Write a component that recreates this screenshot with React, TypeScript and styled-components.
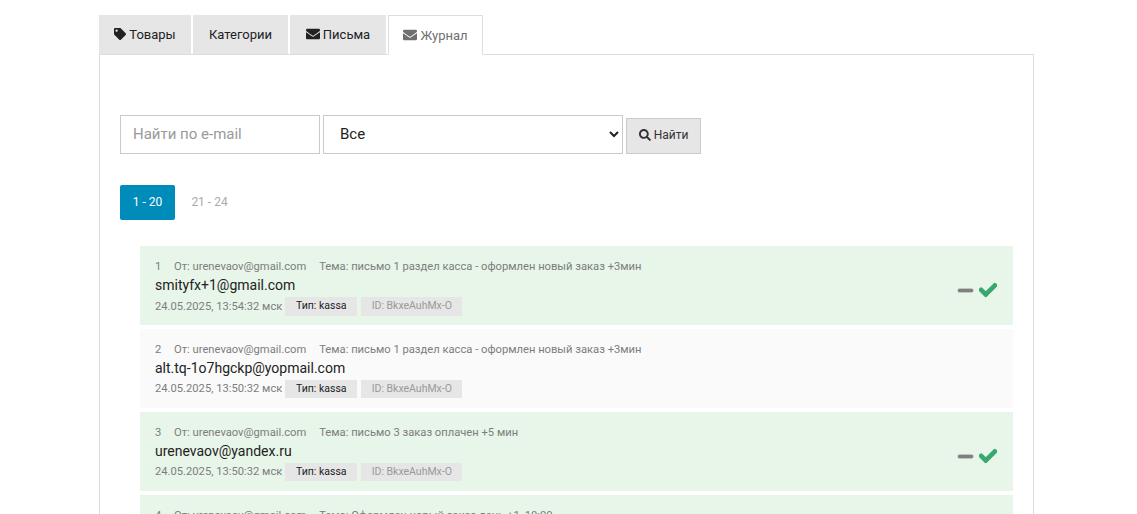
import React from "react";
import styled, { createGlobalStyle } from "styled-components";
import { FaTag, FaEnvelope, FaSearch, FaCheck, FaMinus } from "react-icons/fa";

const Global = createGlobalStyle`
  html, body { margin: 0; padding: 0; background: #fff; overflow: hidden; height: 514px; }
  body { font-family: Roboto, "Liberation Sans", sans-serif; color: #222; }
  * { box-sizing: border-box; }
`;

const Page = styled.div`
  width: 935px;
  margin-left: 99px;
  padding-top: 15px;
`;

const Tabs = styled.nav`
  display: flex;
  gap: 2px;
  height: 40px;
  margin-bottom: -1px;
  position: relative;
  z-index: 1;
`;

const Tab = styled.a<{ $active?: boolean; $w: number }>`
  display: flex;
  align-items: center;
  justify-content: center;
  gap: 3px;
  width: ${(p) => p.$w}px;
  height: ${(p) => (p.$active ? 40 : 39)}px;
  padding-bottom: ${(p) => (p.$active ? 0 : 1)}px;
  font-size: 13px;
  color: ${(p) => (p.$active ? "#6f6f6f" : "#222")};
  background: ${(p) => (p.$active ? "#fff" : "#e6e6e6")};
  border: ${(p) => (p.$active ? "1px solid #ddd" : "0")};
  border-bottom: ${(p) => (p.$active ? "1px solid #fff" : "0")};
  svg { font-size: 14px; }
`;

const TagIcon = styled(FaTag)`
  && { font-size: 12px; }
`;

const Panel = styled.section`
  border: 1px solid #ddd;
  border-bottom: 0;
  padding: 60px 20px 0;
  height: 470px;
`;

const SearchBar = styled.form`
  display: flex;
  align-items: flex-end;
  gap: 3px;
`;

const TextInput = styled.input`
  width: 200px;
  height: 39px;
  padding: 0 12px 2px;
  font: 15px Roboto, sans-serif;
  border: 1px solid #cacaca;
  background: #fff;
  outline: none;
  &::placeholder { color: #9a9a9a; opacity: 1; }
`;

const Select = styled.select`
  width: 300px;
  height: 39px;
  padding: 0 12px 2px;
  font: 15px Roboto, sans-serif;
  color: #222;
  border: 1px solid #cacaca;
  border-radius: 0;
  background: #fff;
  outline: none;
`;

const SearchButton = styled.button`
  display: flex;
  align-items: center;
  justify-content: center;
  gap: 3px;
  width: 75px;
  height: 36px;
  padding: 0 0 2px;
  font: 12px Roboto, sans-serif;
  color: #333;
  background: #e6e6e6;
  border: 1px solid #cacaca;
  svg { font-size: 12px; }
`;

const Pager = styled.div`
  display: flex;
  gap: 7px;
  margin-top: 31px;
`;

const PageLink = styled.a<{ $active?: boolean }>`
  display: flex;
  align-items: center;
  justify-content: center;
  width: 55px;
  height: 35px;
  padding-bottom: 2px;
  font-size: 12px;
  border-radius: 2px;
  color: ${(p) => (p.$active ? "#fff" : "#aaa")};
  background: ${(p) => (p.$active ? "#008cba" : "transparent")};
`;

const List = styled.ul`
  list-style: none;
  margin: 26px 0 0 20px;
  padding: 0;
  display: flex;
  flex-direction: column;
  gap: 4px;
`;

const Row = styled.li<{ $sent: boolean }>`
  display: flex;
  align-items: center;
  justify-content: space-between;
  height: 79px;
  padding: 0 16px 0 15px;
  background: ${(p) => (p.$sent ? "#e8f5e9" : "#fafafa")};
`;

const Info = styled.div`
  display: flex;
  flex-direction: column;
  align-self: flex-start;
  padding-top: 13px;
`;

const Meta = styled.div`
  display: flex;
  gap: 13px;
  font-size: 11.2px;
  line-height: 16px;
  color: #7d7d7d;
`;

const Num = styled.span`
  width: 6px;
`;

const Email = styled.div`
  font-size: 14px;
  line-height: 20px;
  color: #222;
`;

const Details = styled.div`
  display: flex;
  align-items: center;
  gap: 3px;
  margin-top: 2px;
  font-size: 11.2px;
  color: #7d7d7d;
`;

const Stamp = styled.span`
  padding-bottom: 2px;
  li:first-child & { padding-bottom: 0; }
`;

const Badge = styled.span<{ $muted?: boolean }>`
  display: flex;
  align-items: center;
  justify-content: center;
  height: 18px;
  padding-bottom: 2px;
  font-size: 10.5px;
  background: #e6e6e6;
  color: ${(p) => (p.$muted ? "#999" : "#222")};
  width: ${(p) => (p.$muted ? 101 : 72)}px;
  margin-left: ${(p) => (p.$muted ? 1 : 0)}px;
  li:first-child & { height: 19px; }
`;

const Status = styled.div`
  display: flex;
  align-items: center;
  gap: 5px;
  padding-top: 9px;
`;

const Dash = styled(FaMinus)`
  color: #808080;
  font-size: 17px;
  stroke: #808080;
  stroke-width: 20;
`;

const Check = styled(FaCheck)`
  color: #38a86f;
  font-size: 18px;
  stroke: #38a86f;
  stroke-width: 30;
`;

const rows = [
  { n: 1, subject: "письмо 1 раздел касса - оформлен новый заказ +3мин", email: "smityfx+1@gmail.com", date: "24.05.2025, 13:54:32 мск", sent: true },
  { n: 2, subject: "письмо 1 раздел касса - оформлен новый заказ +3мин", email: "alt.tq-1o7hgckp@yopmail.com", date: "24.05.2025, 13:50:32 мск", sent: false },
  { n: 3, subject: "письмо 3 заказ оплачен +5 мин", email: "urenevaov@yandex.ru", date: "24.05.2025, 13:50:32 мск", sent: true },
  { n: 4, subject: "Оформлен новый заказ день +1, 10:00", email: "urenevaov@yandex.ru", date: "24.05.2025, 13:50:32 мск", sent: true },
];

export default function App() {
  return (
    <Page>
      <Global />
      <Tabs>
        <Tab $w={92}><TagIcon />Товары</Tab>
        <Tab $w={95}>Категории</Tab>
        <Tab $w={96}><FaEnvelope />Письма</Tab>
        <Tab $w={95} $active><FaEnvelope />Журнал</Tab>
      </Tabs>
      <Panel>
        <SearchBar>
          <TextInput placeholder="Найти по e-mail" />
          <Select defaultValue="all"><option value="all">Все</option></Select>
          <SearchButton type="button"><FaSearch />Найти</SearchButton>
        </SearchBar>
        <Pager>
          <PageLink $active>1 - 20</PageLink>
          <PageLink>21 - 24</PageLink>
        </Pager>
        <List>
          {rows.map((r) => (
            <Row key={r.n} $sent={r.sent}>
              <Info>
                <Meta>
                  <Num>{r.n}</Num>
                  <span>От: urenevaov@gmail.com</span>
                  <span>Тема: {r.subject}</span>
                </Meta>
                <Email>{r.email}</Email>
                <Details>
                  <Stamp>{r.date}</Stamp>
                  <Badge>Тип: kassa</Badge>
                  <Badge $muted>ID: BkxeAuhMx-O</Badge>
                </Details>
              </Info>
              {r.sent && (
                <Status>
                  <Dash />
                  <Check />
                </Status>
              )}
            </Row>
          ))}
        </List>
      </Panel>
    </Page>
  );
}
